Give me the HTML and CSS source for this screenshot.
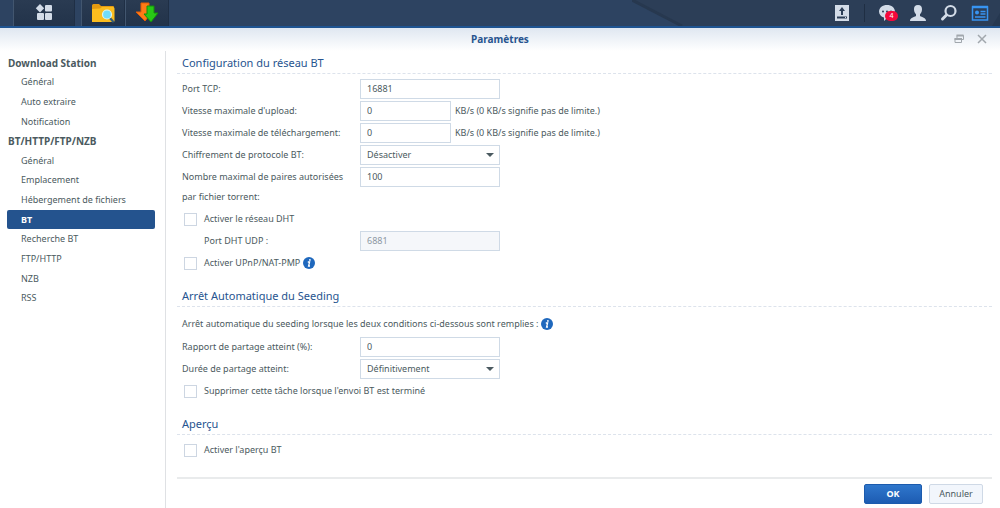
FILE: index.html
```html
<!DOCTYPE html>
<html lang="fr">
  <head>
    <meta charset="UTF-8" />
    <meta name="viewport" content="width=device-width, initial-scale=1.0" />
    <title>Download Station - Paramètres</title>
    <link rel="stylesheet" href="styles.css">
  </head>
  <body>
    <header class="taskbar">
      <svg class="taskbar-bg" width="368" height="26" viewBox="0 0 368 26" aria-hidden="true">
        <path d="M0 0L50 26H368V0Z" fill="#2c3e57" />
        <path d="M0 0L50 26" stroke="#27384f" stroke-width="3" />
        <path d="M368 13L360 26H368Z" fill="#263850" />
      </svg>
      <div class="apps">
        <button class="app app-menu" aria-label="Menu principal">
          <svg width="18" height="18" viewBox="0 0 18 18" fill="#d3dce8">
            <path d="M5 0L9.200 4.200L5 8.400L.8 4.200Z" />
            <rect x="10" y="1" width="7" height="6.500" rx="1" />
            <rect x="2" y="9" width="7" height="7" rx="1" />
            <rect x="10" y="9" width="7" height="7" rx="1" />
          </svg>
        </button>
        <button class="app" aria-label="File Station">
          <svg width="24" height="20" viewBox="0 0 24 20">
            <path d="M1 2.500Q1 1 2.500 1H8L10 3H22Q23 3 23 4V18Q23 19 22 19H1Z" fill="#e49a10" />
            <path d="M1 6Q4 5.500 9 5.500L11 4H22Q23.500 4 23.500 5.500V18Q23.500 19 22 19H1Z" fill="#fcbd1e" />
            <path d="M18.500 14.500L22 18.500" stroke="#345d78" stroke-width="2.200" stroke-linecap="round" />
            <circle cx="16" cy="11.500" r="4.500" fill="#72dcfa" stroke="#dff4f3" stroke-width="1.200" />
          </svg>
        </button>
        <button class="app" aria-label="Download Station">
          <svg width="24" height="22" viewBox="0 0 24 22">
            <path d="M6 1H14V9H18L10 19L1 10H6Z" fill="#ff7b16" stroke="#e35c06" />
            <path d="M12 4H19V11H23L16 20L9 12H12Z" fill="#28c915" stroke="#14900b" />
          </svg>
        </button>
      </div>
      <div class="tray">
        <button aria-label="Envoi">
          <svg width="18" height="18" viewBox="0 0 18 18">
            <path d="M2 1H16V17H2Z" fill="#d3dce8" />
            <path d="M9 3L12 7H10V11H8V7H6Z" fill="#2c3e57" />
            <path d="M4 13.500H14" stroke="#2c3e57" stroke-width="2" />
            <path d="M12 13.500H13" stroke="#d3dce8" />
          </svg>
        </button>
        <span class="tray-divider"></span>
        <button class="notifications" aria-label="Notifications">
          <svg width="18" height="18" viewBox="0 0 18 18">
            <path d="M9 1C13.400 1 17 3.700 17 7.500S13.500 14 9 14L6 17V13.500C3 12.700 1 10.400 1 7.500C1 3.700 4.600 1 9 1Z" fill="#d3dce8" />
            <g fill="#2c3e57"><circle cx="5" cy="7.500" r="1" /><circle cx="9" cy="7.500" r="1" /><circle cx="13" cy="7.500" r="1" /></g>
          </svg>
          <span class="badge">4</span>
        </button>
        <button aria-label="Utilisateur">
          <svg width="18" height="18" viewBox="0 0 18 18" fill="#d3dce8">
            <path d="M9 1C12 1 13.200 3 13 5.500C12.900 8 11.800 9.400 11 10.200V12C13 13.300 17 13.500 17 17H1C1 13.500 5 13.300 7 12V10.200C6.200 9.400 5.100 8 5 5.500C4.800 3 6 1 9 1Z" />
          </svg>
        </button>
        <button aria-label="Rechercher">
          <svg width="18" height="18" viewBox="0 0 18 18" fill="none" stroke="#d3dce8">
            <circle cx="10.500" cy="7" r="5" stroke-width="2.200" />
            <path d="M6.500 11L2.500 15" stroke-width="3" stroke-linecap="round" />
          </svg>
        </button>
        <button aria-label="Widgets">
          <svg width="18" height="18" viewBox="0 0 18 18">
            <path d="M1.500 3H16.500V16H1.500Z" fill="none" stroke="#3794f2" stroke-width="1.500" />
            <path d="M1 3H17" stroke="#3794f2" stroke-width="2.500" />
            <circle cx="6" cy="8.500" r="2" fill="#3794f2" />
            <path d="M9.500 7.500H14.500M9.500 10H14.500M4 13H14.500" stroke="#3794f2" stroke-width="1.300" />
          </svg>
        </button>
      </div>
    </header>

    <div class="window">
      <div class="titlebar">
        <h1>Paramètres</h1>
        <div class="window-tools">
          <button aria-label="Restaurer">
            <svg width="10" height="10" viewBox="0 0 10 10" fill="none" stroke="#a1a7ad">
              <path d="M3 4V1.500H9.500V5.500H8M1 4.500H7.500V8.500H1Z" />
              <path d="M2.500 1.500H9.500M.5 5H8" stroke-width="2" />
            </svg>
          </button>
          <button aria-label="Fermer">
            <svg width="10" height="10" viewBox="0 0 10 10" stroke="#a1a7ad" stroke-width="1.500">
              <path d="M1 1L9 9M9 1L1 9" />
            </svg>
          </button>
        </div>
      </div>

      <div class="content">
        <nav class="sidebar">
          <div class="nav-list">
            <h2>Download Station</h2>
            <a href="#">Général</a>
            <a href="#">Auto extraire</a>
            <a href="#">Notification</a>
            <h2>BT/HTTP/FTP/NZB</h2>
            <a href="#">Général</a>
            <a href="#">Emplacement</a>
            <a href="#">Hébergement de fichiers</a>
            <a href="#" class="active">BT</a>
            <a href="#">Recherche BT</a>
            <a href="#">FTP/HTTP</a>
            <a href="#">NZB</a>
            <a href="#">RSS</a>
          </div>
        </nav>

        <form class="panel">
          <div class="sections">
            <section>
              <h3>Configuration du réseau BT</h3>
              <div class="row">
                <label for="tcp-port">Port TCP:</label>
                <input type="text" id="tcp-port" value="16881" />
              </div>
              <div class="row">
                <label for="max-upload">Vitesse maximale d'upload:</label>
                <input type="text" id="max-upload" class="short" value="0" />
                <span class="hint">KB/s (0 KB/s signifie pas de limite.)</span>
              </div>
              <div class="row">
                <label for="max-download">Vitesse maximale de téléchargement:</label>
                <input type="text" id="max-download" class="short" value="0" />
                <span class="hint">KB/s (0 KB/s signifie pas de limite.)</span>
              </div>
              <div class="row">
                <label for="encryption">Chiffrement de protocole BT:</label>
                <select id="encryption">
                  <option>Désactiver</option>
                </select>
              </div>
              <div class="row">
                <label for="max-peers">Nombre maximal de paires autorisées par fichier torrent:</label>
                <input type="text" id="max-peers" value="100" />
              </div>
              <div class="row">
                <input type="checkbox" id="dht" />
                <label for="dht">Activer le réseau DHT</label>
              </div>
              <div class="row nested">
                <label for="dht-port">Port DHT UDP :</label>
                <input type="text" id="dht-port" value="6881" disabled />
              </div>
              <div class="row">
                <input type="checkbox" id="upnp" />
                <label for="upnp">Activer UPnP/NAT-PMP</label>
                <svg class="info" width="12" height="12" viewBox="0 0 12 12">
                  <circle cx="6" cy="6" r="6" fill="#1f68bd" />
                  <path d="M4.800 5H6.600L5.600 9H7" fill="none" stroke="#fff" stroke-width="1.300" />
                  <circle cx="6.900" cy="2.900" r=".9" fill="#fff" />
                </svg>
              </div>
            </section>

            <section>
              <h3>Arrêt Automatique du Seeding</h3>
              <div class="row intro">
                <span>Arrêt automatique du seeding lorsque les deux conditions ci-dessous sont remplies :</span>
                <svg class="info" width="12" height="12" viewBox="0 0 12 12">
                  <circle cx="6" cy="6" r="6" fill="#1f68bd" />
                  <path d="M4.800 5H6.600L5.600 9H7" fill="none" stroke="#fff" stroke-width="1.300" />
                  <circle cx="6.900" cy="2.900" r=".9" fill="#fff" />
                </svg>
              </div>
              <div class="row">
                <label for="share-ratio">Rapport de partage atteint (%):</label>
                <input type="text" id="share-ratio" value="0" />
              </div>
              <div class="row">
                <label for="share-time">Durée de partage atteint:</label>
                <select id="share-time">
                  <option>Définitivement</option>
                </select>
              </div>
              <div class="row">
                <input type="checkbox" id="remove-task" />
                <label for="remove-task">Supprimer cette tâche lorsque l'envoi BT est terminé</label>
              </div>
            </section>

            <section>
              <h3>Aperçu</h3>
              <div class="row">
                <input type="checkbox" id="preview" />
                <label for="preview">Activer l'aperçu BT</label>
              </div>
            </section>
          </div>

          <div class="actions">
            <button type="submit" class="btn primary">OK</button>
            <button type="button" class="btn">Annuler</button>
          </div>
        </form>
      </div>
    </div>
  </body>
</html>
```
FILE: styles.css
```css
* {
  box-sizing: border-box;
  margin: 0;
  padding: 0;
}

body {
  min-height: 100vh;
  display: flex;
  flex-direction: column;
  font-family: "Noto Sans", "Open Sans", sans-serif;
  font-size: 9px;
  line-height: 20px;
  color: #4b5a60;
  background: #ffffff;
}

button,
input,
select {
  font: inherit;
  color: inherit;
}

button {
  border: 0;
  background: none;
  cursor: pointer;
}

svg {
  display: block;
}

/* Taskbar */
.taskbar {
  position: relative;
  height: 28px;
  display: flex;
  justify-content: space-between;
  background: #2d4361;
  border-bottom: 2px solid #1f5491;
}

.taskbar-bg {
  position: absolute;
  top: 0;
  right: 0;
}

.apps {
  display: flex;
  padding-left: 13px;
}

.app {
  width: 44px;
  display: flex;
  align-items: center;
  justify-content: center;
  background: linear-gradient(#2a3b52, #22334a);
  border-left: 1px solid #42566f;
  border-right: 1px solid #1f2f45;
}

.app-menu {
  width: 62px;
  margin-right: 6px;
}

.tray {
  position: relative;
  display: flex;
  align-items: center;
  gap: 13px;
  padding-right: 11px;
}

.tray-divider {
  width: 1px;
  height: 18px;
  background: #1f2e43;
}

.notifications {
  position: relative;
}

.badge {
  position: absolute;
  top: 7px;
  left: 7px;
  width: 13px;
  height: 10px;
  border-radius: 5px;
  background: #f5093c;
  color: #ffffff;
  font-size: 7px;
  line-height: 10px;
  text-align: center;
}

/* Window */
.window {
  flex: 1;
  display: flex;
  flex-direction: column;
}

.titlebar {
  position: relative;
  height: 23px;
  background: linear-gradient(#dfe7f1, #ffffff);
}

h1 {
  font-size: 10px;
  line-height: 23px;
  text-align: center;
  color: #27548f;
}

.window-tools {
  position: absolute;
  top: 6px;
  right: 13px;
  display: flex;
  gap: 13px;
}

.content {
  flex: 1;
  display: flex;
}

.sidebar {
  width: 166px;
  padding: 2px 10px 0 7px;
  border-right: 1px solid #dfe1e4;
}

.nav-list {
  height: 255px;
  display: flex;
  flex-direction: column;
  line-height: 16px;
}

.nav-list h2,
.nav-list a {
  flex: 1;
  display: flex;
  align-items: center;
}

.nav-list h2 {
  padding-left: 1px;
  font-size: 10px;
}

.nav-list a {
  padding-left: 14px;
  border-radius: 2px;
  color: inherit;
  text-decoration: none;
}

.nav-list a.active {
  background: #24538e;
  color: #ffffff;
  font-weight: bold;
}

/* Settings form */
.panel {
  flex: 1;
  display: flex;
  flex-direction: column;
  padding: 2px 8px 4px 11px;
}

.sections {
  flex: 1;
}

section {
  margin-bottom: 13px;
}

section:last-child {
  margin-bottom: 0;
}

h3 {
  height: 21px;
  margin-bottom: 5px;
  padding-left: 5px;
  border-bottom: 1px dashed #dde3ec;
  font-size: 11px;
  font-weight: normal;
  color: #27548f;
}

.row {
  display: flex;
  align-items: flex-start;
  min-height: 20px;
  margin-bottom: 2px;
  padding-left: 5px;
}

.row > label:first-child {
  width: 178px;
  padding-right: 10px;
}

.row.nested {
  padding-left: 27px;
}

.row.nested > label:first-child {
  width: 156px;
}

.row.intro {
  padding-top: 2px;
  margin-bottom: 3px;
}

input[type="text"],
select {
  width: 140px;
  height: 20px;
  padding: 0 6px;
  border: 1px solid #cfdae6;
  background: #ffffff;
}

input[type="text"].short {
  width: 91px;
}

input[type="text"]:disabled {
  background: #f5f7fa;
  color: #8d98a3;
}

select {
  appearance: none;
  line-height: 18px;
  background: #ffffff
    url("data:image/svg+xml,%3Csvg xmlns='http://www.w3.org/2000/svg' width='8' height='4'%3E%3Cpath d='M0 0H8L4 4Z' fill='%234b5a60'/%3E%3C/svg%3E")
    no-repeat right 5px center;
}

input[type="checkbox"] {
  appearance: none;
  width: 13px;
  height: 13px;
  margin: 4px 7px 0 2px;
  border: 1px solid #cdd6e2;
  background: #ffffff;
}

input[type="checkbox"]:checked {
  background: #24538e;
}

.hint {
  padding-left: 4px;
}

.info {
  margin: 4px 0 0 3px;
}

.actions {
  display: flex;
  justify-content: flex-end;
  gap: 7px;
  padding: 5px 9px 0 0;
  border-top: 2px solid #e9ebec;
}

.btn {
  min-width: 54px;
  height: 20px;
  border: 1px solid #cfd9e6;
  border-radius: 2px;
  background: #f2f6fc;
  line-height: 18px;
}

.btn.primary {
  min-width: 58px;
  border-color: #1c5bad;
  background: linear-gradient(#2f77cc, #1d5cb2);
  color: #ffffff;
  font-weight: bold;
}
```
